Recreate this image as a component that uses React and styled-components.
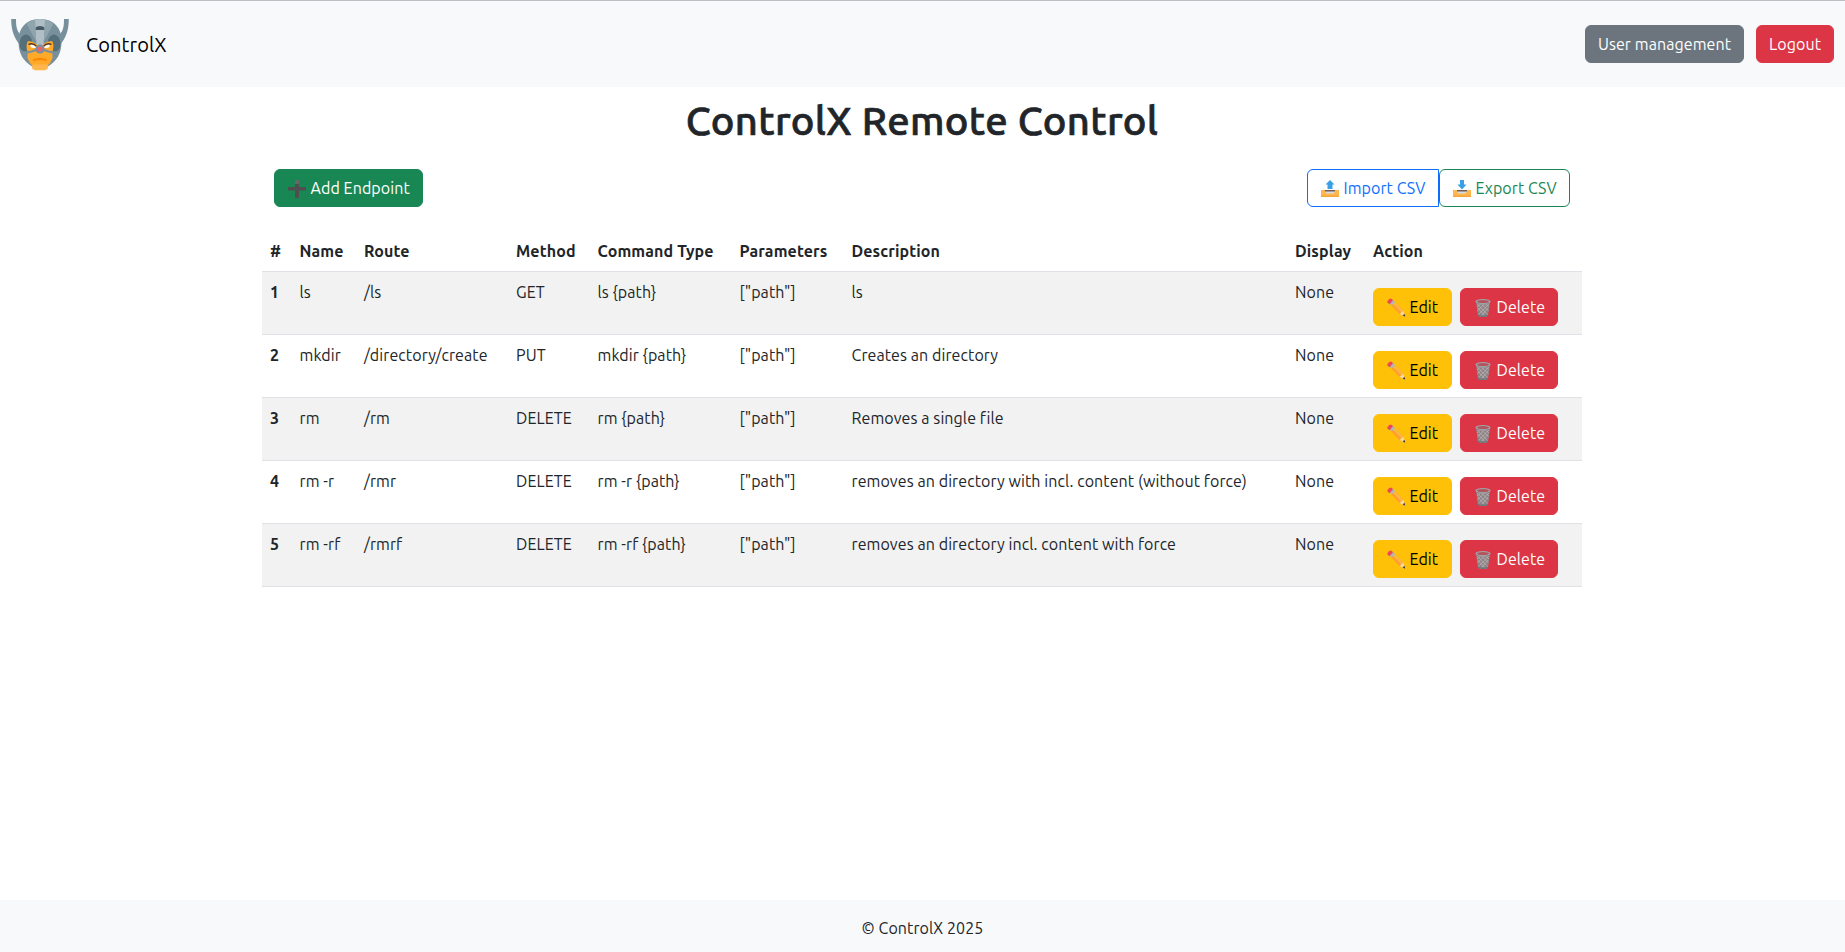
import React from "react";
import styled, { createGlobalStyle, css } from "styled-components";

const GlobalStyle = createGlobalStyle`
  *, *::before, *::after { box-sizing: border-box; }
  body {
    margin: 0;
    background: #fff;
    color: #212529;
    font-family: Ubuntu, "Noto Sans", "Liberation Sans", sans-serif;
    font-size: 16px;
    line-height: 1.5;
    letter-spacing: 0.085px;
  }
`;

const Page = styled.div`
  display: flex;
  flex-direction: column;
  min-height: 100vh;
  border-top: 1px solid #bfbfc3;
`;

const Navbar = styled.header`
  display: flex;
  align-items: center;
  justify-content: space-between;
  height: 86px;
  padding: 8px 11px 8px 5px;
  background: #f8f9fa;
`;

const Brand = styled.a`
  display: flex;
  align-items: center;
  gap: 11px;
  color: #000;
  font-size: 20px;
  line-height: 30px;
  text-decoration: none;
`;

const BrandName = styled.span`
  padding-top: 1px;
`;

const NavActions = styled.nav`
  display: flex;
  gap: 12px;
`;

const variants = {
  secondary: css`background: #6c757d; border-color: #6c757d; color: #fff;`,
  danger: css`background: #dc3545; border-color: #dc3545; color: #fff;`,
  success: css`background: #198754; border-color: #198754; color: #fff;`,
  warning: css`background: #ffc107; border-color: #ffc107; color: #000;`,
  outlinePrimary: css`background: transparent; border-color: #0d6efd; color: #0d6efd;`,
  outlineSuccess: css`background: transparent; border-color: #198754; color: #198754;`,
};

const Button = styled.button`
  display: inline-flex;
  align-items: center;
  justify-content: ${(p) => (p.$centered ? "center" : "flex-start")};
  width: ${(p) => p.$width}px;
  height: 38px;
  padding: 0 0 0 ${(p) => (p.$centered ? 0 : 12)}px;
  border: 1px solid;
  border-radius: 6px;
  font: inherit;
  letter-spacing: inherit;
  white-space: nowrap;
  cursor: pointer;
  ${(p) => variants[p.$variant]}
`;

const Glyph = styled.svg`
  flex: none;
  width: 20px;
  height: 20px;
  margin: 2px 3.5px 0 0;
`;

const Main = styled.main`
  flex: 1;
  width: 1321px;
  margin: 0 auto;
  padding: 10px 1px 0 0;
`;

const Title = styled.h1`
  margin: 0 0 24px;
  font-size: 40px;
  font-weight: 500;
  line-height: 48px;
  letter-spacing: 0.33px;
  text-align: center;
  -webkit-text-stroke: 0.7px currentColor;
`;

const Toolbar = styled.div`
  display: flex;
  justify-content: space-between;
  padding: 0 12px;
  margin-bottom: 24px;
`;

const ButtonGroup = styled.div`
  display: flex;

  & > :first-child { border-radius: 6px 0 0 6px; }
`;

const Table = styled.table`
  width: 100%;
  table-layout: fixed;
  border-collapse: separate;
  border-spacing: 0;
`;

const Col = styled.col`
  width: ${(p) => p.$width}px;
`;

const HeadCell = styled.th`
  padding: 8px;
  border-bottom: 1px solid #dee2e6;
  font-weight: 700;
  letter-spacing: 0.12px;
  text-align: left;
  white-space: nowrap;
`;

const Row = styled.tr`
  &:nth-child(odd) { background: #f2f2f2; }
`;

const Cell = styled.td`
  height: 63px;
  padding: 8px;
  border-bottom: 1px solid #dee2e6;
  vertical-align: top;
  font-weight: ${(p) => (p.$strong ? 700 : 400)};
  white-space: nowrap;
`;

const RowActions = styled.div`
  display: flex;
  gap: 8px;
  margin-top: 8px;
`;

const Footer = styled.footer`
  height: 52px;
  padding-top: 16px;
  background: #f8f9fa;
  text-align: center;
`;

const LogoSvg = styled.svg`
  width: 70px;
  height: 70px;
`;

const Logo = () => (
  <LogoSvg viewBox="0 0 70 70">
    <path d="M6.2 10H11C11 19 12 23 18 28L15 36C9 29 6.2 21 6.2 10Z" fill="#78909c" />
    <path d="M63.8 10H59C59 19 58 23 52 28L55 36C61 29 63.8 21 63.8 10Z" fill="#78909c" />
    <path d="M35 10C21 10 13.500 19 13.500 32C13.500 45 18 52 28 58H42C52 52 56.500 45 56.500 32C56.500 19 49 10 35 10Z" fill="#78909c" />
    <path d="M30 10.500L31 32L21.500 14.500Q25 11.500 30 10.500ZM40 10.500L39 32L48.500 14.500Q45 11.500 40 10.500Z" fill="#90a4ae" />
    <path d="M30 10.400Q35 9.600 40 10.400L38.500 38H31.500Z" fill="#b0bec5" />
    <ellipse cx="21" cy="34.500" rx="6.500" ry="9" fill="#546e7a" />
    <ellipse cx="49" cy="34.500" rx="6.500" ry="9" fill="#546e7a" />
    <path d="M22.500 32.500C27 31.500 31 34 35 38.500C39 34 43 31.500 47.500 32.500C49 36 48.500 40 47.300 43.500L47.500 49Q45.500 54 42.500 57V60H27.500V57Q24.500 54 22.500 49L22.700 43.500C21.500 40 21 36 22.500 32.500Z" fill="#ffa92b" />
    <path d="M27.500 55.500H42.500V60L40 61.300H30L27.500 60Z" fill="#ffb74d" />
    <path d="M25.500 35L32.500 38.300Q28.500 40 25.500 38ZM44.500 35L37.500 38.300Q41.500 40 44.500 38Z" fill="#fff" />
    <path d="M23.500 35.300Q28.500 33.500 31.500 37.300M46.500 35.300Q41.500 33.500 38.500 37.300" fill="none" stroke="#4e342e" strokeWidth="1.300" />
    <path d="M18 43.500Q26 43.500 32 40.500M52 43.500Q44 43.500 38 40.500" fill="none" stroke="#78909c" strokeWidth="2.400" />
    <path d="M30.700 21V18.500Q31.500 17 35 17Q38.500 17 39.300 18.500V21Z" fill="#455a64" />
    <circle cx="35" cy="40" r="4.500" fill="#78909c" />
    <circle cx="35" cy="40" r="2.500" fill="#ef5f68" />
    <path d="M28.500 51.800Q29.500 50 35 50Q40.500 50 41.500 51.800" fill="none" stroke="#ff8500" strokeWidth="2" />
  </LogoSvg>
);

const PlusGlyph = () => (
  <Glyph viewBox="0 0 20 20">
    <path d="M8 1H12V8H19V11.500H12V19H8V11.500H1V8H8Z" fill="#504f50" />
    <path d="M8 1H12V5H8Z" fill="#686768" />
  </Glyph>
);

const TrayGlyph = ({ down }) => (
  <Glyph viewBox="0 0 20 20">
    <path d="M1 11H19V18H1Z" fill="#ffb74d" />
    <path d="M1 16.500H19V18H1Z" fill="#f5a63b" />
    <path d="M5 11H15V12.500L13.500 14.500H6.500L5 12.500Z" fill="#d7dce0" />
    <path d="M5 11H15V12.500H5Z" fill="#755b55" />
    {down ? (
      <path d="M8 1H12V5.500H14.500L10 10.500L5.500 5.500H8Z" fill="#3b9fe6" />
    ) : (
      <path d="M10 1L14.500 5.500H12.500V10H7.500V5.500H5.500Z" fill="#3b9fe6" />
    )}
  </Glyph>
);

const PencilGlyph = () => (
  <Glyph viewBox="0 0 20 20">
    <path d="M5 7L8.500 3.500L17.500 12.500L19 18.500L13.500 16Z" fill="#ff9d2e" />
    <path d="M6.500 5.500L8.500 3.500L17.500 12.500L15.500 14.500Z" fill="#ffb641" />
    <path d="M13.500 16L17.500 12.500L19 18.500Z" fill="#f7d9a2" />
    <path d="M16.700 17.500L18.500 15.800L19.200 18.800Z" fill="#343b42" />
    <path d="M3 5L6.500 1.500L9 4L5.500 7.500Z" fill="#a9b7bf" />
    <path d="M1.500 4.500Q0.800 3.500 2.200 2L3.300 1Q4.700 0 5.800 1L7 2.200L3.500 6.200Z" fill="#ef4654" />
  </Glyph>
);

const TrashGlyph = () => (
  <Glyph viewBox="0 0 20 20">
    <path d="M3 4H17L15 17.500Q14 19 10 19Q6 19 5 17.500Z" fill="#8d8386" />
    <path d="M4.200 6L15 17M4.800 10L12.500 18.500M8 5.500L15.700 13M12 5.500L16 9M15.800 6L5 17M15.200 10L7.500 18.500M12 5.500L4.300 13M8 5.500L4 9" stroke="#c0b7b9" strokeWidth="0.700" fill="none" />
    <ellipse cx="10" cy="3.500" rx="7.600" ry="2.500" fill="#9fa5a7" />
    <ellipse cx="10" cy="3.600" rx="6" ry="1.500" fill="#b3535d" />
    <path d="M5 16.500Q10 18.500 15 16.500L14.700 18Q10 20 5.300 18Z" fill="#6b777c" />
  </Glyph>
);

const columns = [
  { label: "#", width: 29.5 },
  { label: "Name", width: 64.5 },
  { label: "Route", width: 152 },
  { label: "Method", width: 81.5 },
  { label: "Command Type", width: 142 },
  { label: "Parameters", width: 112 },
  { label: "Description", width: 443.5 },
  { label: "Display", width: 78 },
  { label: "Action", width: 217 },
];

const endpoints = [
  { name: "ls", route: "/ls", method: "GET", command: "ls {path}", description: "ls" },
  { name: "mkdir", route: "/directory/create", method: "PUT", command: "mkdir {path}", description: "Creates an directory" },
  { name: "rm", route: "/rm", method: "DELETE", command: "rm {path}", description: "Removes a single file" },
  { name: "rm -r", route: "/rmr", method: "DELETE", command: "rm -r {path}", description: "removes an directory with incl. content (without force)" },
  { name: "rm -rf", route: "/rmrf", method: "DELETE", command: "rm -rf {path}", description: "removes an directory incl. content with force" },
];

export default function App() {
  return (
    <>
      <GlobalStyle />
      <Page>
        <Navbar>
          <Brand>
            <Logo />
            <BrandName>ControlX</BrandName>
          </Brand>
          <NavActions>
            <Button $variant="secondary" $width={159} $centered>User management</Button>
            <Button $variant="danger" $width={78} $centered>Logout</Button>
          </NavActions>
        </Navbar>
        <Main>
          <Title>ControlX Remote Control</Title>
          <Toolbar>
            <Button $variant="success" $width={149}><PlusGlyph />Add Endpoint</Button>
            <ButtonGroup>
              <Button $variant="outlinePrimary" $width={132}><TrayGlyph />Import CSV</Button>
              <Button $variant="outlineSuccess" $width={131}><TrayGlyph down />Export CSV</Button>
            </ButtonGroup>
          </Toolbar>
          <Table>
            <colgroup>
              {columns.map((c) => <Col key={c.label} $width={c.width} />)}
            </colgroup>
            <thead>
              <tr>
                {columns.map((c) => <HeadCell key={c.label}>{c.label}</HeadCell>)}
              </tr>
            </thead>
            <tbody>
              {endpoints.map((e, i) => (
                <Row key={e.route}>
                  <Cell $strong>{i + 1}</Cell>
                  <Cell>{e.name}</Cell>
                  <Cell>{e.route}</Cell>
                  <Cell>{e.method}</Cell>
                  <Cell>{e.command}</Cell>
                  <Cell>["path"]</Cell>
                  <Cell>{e.description}</Cell>
                  <Cell>None</Cell>
                  <Cell>
                    <RowActions>
                      <Button $variant="warning" $width={79}><PencilGlyph />Edit</Button>
                      <Button $variant="danger" $width={98}><TrashGlyph />Delete</Button>
                    </RowActions>
                  </Cell>
                </Row>
              ))}
            </tbody>
          </Table>
        </Main>
        <Footer>© ControlX 2025</Footer>
      </Page>
    </>
  );
}
